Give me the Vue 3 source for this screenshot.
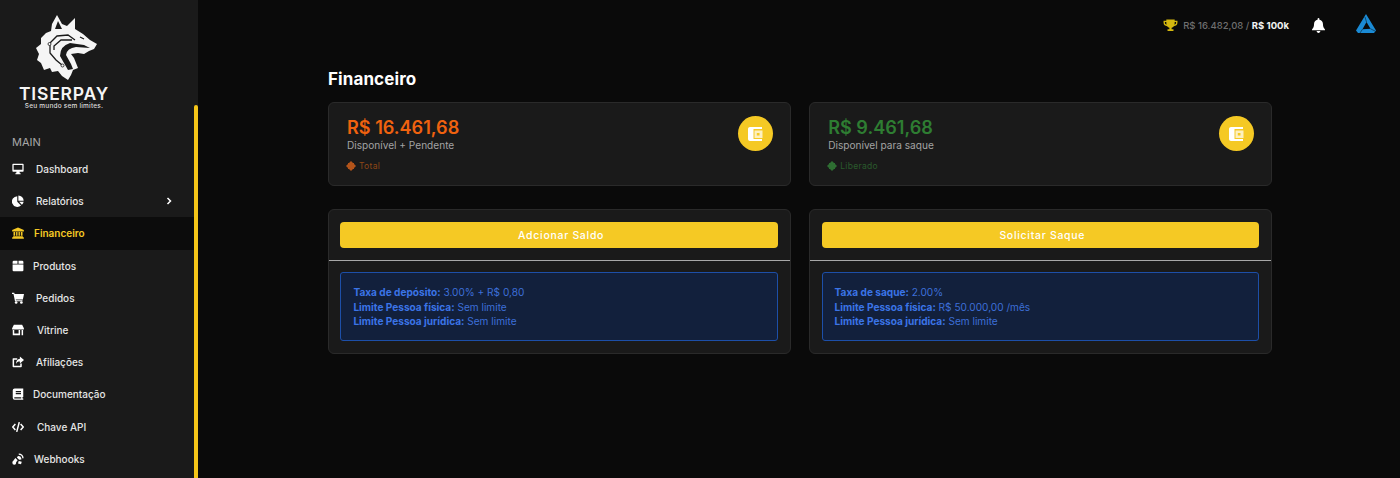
<template>
  <div class="layout">
    <aside class="sidebar">
      <div class="brand">
        <svg class="wolf" viewBox="35 14 64 68" width="64" height="68">
          <path class="wolf-body" d="M57 15 L62 24 L67 26 L75 18 L75 29 L83 34 L90 40 L97 44 L94 49 L89 51 L84 54 L78 53 L71 54 L74 58 L76 63 L78 68 L73 70 L71 75 L68 80 L62 76 L58 71 L52 72 L50 68 L44 70 L41 63 L37 60 L39 54 L36 48 L41 44 L41 38 L46 33 L51 31 L52 24 Z" />
          <path class="wolf-hole" d="M58 21 L62 29 L55 29 Z M60 56 Q60 46 70 43 L84 45 L90 48 L76 47 Q67 48 66 55 L71 64 L73 69 L68 70 Z" />
          <path class="wolf-cut" d="M50 43 L57 36 L68 35 L75 40 M50 45 L50 53 L56 60 L62 65 M54 50 L54 46 L61 40 L72 40 M80 37 L84 39" />
          <circle class="wolf-dot" cx="49.500" cy="44" r="1.500" />
          <circle class="wolf-dot" cx="62.500" cy="65.500" r="1.500" />
        </svg>
        <div class="brand-name">TISERPAY</div>
        <div class="brand-tag">Seu mundo sem limites.</div>
      </div>

      <div class="nav-label">MAIN</div>
      <nav class="nav">
        <a v-for="item in navItems" :key="item.label" class="nav-item" :class="{ active: item.active }">
          <svg class="nav-icon" viewBox="0 0 16 16" v-html="item.icon"></svg>
          <span class="nav-text" :style="{ marginLeft: item.gap + 'px' }">{{ item.label }}</span>
          <svg v-if="item.arrow" class="nav-arrow" viewBox="0 0 8 10" width="6" height="8">
            <path d="M2 1 L6 5 L2 9" />
          </svg>
        </a>
      </nav>
      <div class="scroll-thumb"></div>
    </aside>

    <div class="main">
      <header class="topbar">
        <svg class="trophy" viewBox="0 0 16 14" width="15" height="13">
          <path d="M3.500 0.500 H12.500 V1.800 H15.500 V4 C15.500 6.300 13.600 7.400 11.600 7.800 C11 8.600 10.200 9.100 9.200 9.300 V11 H11.200 V13 H4.800 V11 H6.800 V9.300 C5.800 9.100 5 8.600 4.400 7.800 C2.400 7.400 0.500 6.300 0.500 4 V1.800 H3.500 Z M2 3.200 V4 C2 5 2.800 5.700 3.800 6.100 C3.600 5.300 3.500 4.300 3.500 3.200 Z M14 3.200 H12.500 C12.500 4.300 12.400 5.300 12.200 6.100 C13.200 5.700 14 5 14 4 Z" />
        </svg>
        <span class="goal"><span class="goal-now">R$ 16.482,08 / </span><b>R$ 100k</b></span>
        <svg class="bell" viewBox="0 0 14 16" width="13" height="15">
          <path d="M7 0 C7.600 0 8 0.400 8 1 V1.700 C10.400 2.100 11.800 4.100 11.800 6.500 C11.800 9.500 12.600 10.800 14 12.300 V13 H0 V12.300 C1.400 10.800 2.200 9.500 2.200 6.500 C2.200 4.100 3.600 2.100 6 1.700 V1 C6 0.400 6.400 0 7 0 Z M5 14 H9 C9 15.100 8.100 16 7 16 C5.900 16 5 15.100 5 14 Z" />
        </svg>
        <svg class="logo-mark" viewBox="0 0 20 20" width="20" height="20">
          <path d="M10 0 L20 16.500 L18 19 L2 19 L0 16.500 Z M10.500 8 L6.500 15.200 L14.500 14.800 Z" fill-rule="evenodd" />
          <path class="logo-slit" d="M10.500 8 L9 3 M14.500 14.800 L19 17 M6.500 15.200 L4 19" />
        </svg>
      </header>

      <section class="content">
        <h1 class="page-title">Financeiro</h1>
        <div class="grid">
          <div v-for="card in balances" :key="card.note" class="card balance">
            <div>
              <div class="amount" :class="card.tone">{{ card.amount }}</div>
              <div class="caption">{{ card.caption }}</div>
              <div class="note" :class="card.tone">
                <svg viewBox="0 0 10 10" width="10" height="10"><path d="M5 0 L7 2 H8 V3 L10 5 L8 7 V8 H7 L5 10 L3 8 H2 V7 L0 5 L2 3 V2 H3 Z" /></svg>
                <span>{{ card.note }}</span>
              </div>
            </div>
            <div class="wallet">
              <svg viewBox="0 0 15 14" width="15" height="14">
                <path d="M2 0 H14 V2 H5.500 V12 H14 V14 H2 C0.900 14 0 13.100 0 12 V2 C0 0.900 0.900 0 2 0 Z" />
                <path class="wallet-pocket" d="M6.500 3.500 H14.500 V11 H6.500 Z M8.800 6 V8.500 H11.500 V6 Z" fill-rule="evenodd" />
              </svg>
            </div>
          </div>

          <div v-for="box in actions" :key="box.button" class="card action">
            <div class="action-top">
              <button class="action-btn">{{ box.button }}</button>
            </div>
            <div class="action-info">
              <div class="info">
                <div v-for="row in box.rows" :key="row[0]"><b>{{ row[0] }}</b> {{ row[1] }}</div>
              </div>
            </div>
          </div>
        </div>
      </section>
    </div>
  </div>
</template>

<script setup>
// ── Menu ──────────────────────────────────────────────────────────────────
const navItems = [
  { label: 'Dashboard', gap: 12, icon: '<path fill-rule="evenodd" d="M1.500 1 H14.500 A1 1 0 0 1 15.500 2 V10.500 A1 1 0 0 1 14.500 11.500 H10 L10.400 13.500 H11.500 V15 H4.500 V13.500 H5.600 L6 11.500 H1.500 A1 1 0 0 1 0.500 10.500 V2 A1 1 0 0 1 1.500 1 Z M2.200 2.700 V9 H13.800 V2.700 Z"/>' },
  { label: 'Relatórios', gap: 12, arrow: true, icon: '<path d="M7 1.500 V9 L12 14 A7.200 7.200 0 1 1 7 1.500 Z"/><path d="M8.500 0.500 A7 7 0 0 1 15.500 7.500 H8.500 Z"/><path d="M9.500 9 H15.500 A7.500 7.500 0 0 1 13.200 13 Z"/>' },
  { label: 'Financeiro', gap: 10, active: true, icon: '<path d="M8 0.500 L15.800 4 V6 H0.200 V4 Z"/><path d="M2 6.800 H4.200 V11.500 H2 Z M5.500 6.800 H7.300 V11.500 H5.500 Z M8.700 6.800 H10.500 V11.500 H8.700 Z M11.800 6.800 H14 V11.500 H11.800 Z"/><path d="M1.500 12.300 H14.500 V13.500 H15.800 V15.500 H0.200 V13.500 H1.500 Z"/>' },
  { label: 'Produtos', gap: 9, icon: '<path d="M2.500 1 H7.300 V5 H0.800 V2.800 A1.800 1.800 0 0 1 2.500 1 Z M8.700 1 H13.500 A1.800 1.800 0 0 1 15.200 2.800 V5 H8.700 Z M0.800 6 H15.200 V13.500 A1.500 1.500 0 0 1 13.700 15 H2.300 A1.500 1.500 0 0 1 0.800 13.500 Z"/>' },
  { label: 'Pedidos', gap: 12, icon: '<path d="M0 1 H3 L3.500 2.500 H16 L14.500 10 H5 L5.300 11 H14 V12.300 H4 L2 2.500 H0 Z"/><circle cx="5.500" cy="14" r="1.800"/><circle cx="12.500" cy="14" r="1.800"/>' },
  { label: 'Vitrine', gap: 13, icon: '<path d="M2.500 1 H13.500 L15.800 5.500 V7.300 H0.200 V5.500 Z"/><path fill-rule="evenodd" d="M1 8 H3 V12.500 H8.800 V8 H10.800 V15 H1 Z M12.800 8 H14.800 V15 H12.800 Z"/>' },
  { label: 'Afiliações', gap: 12, icon: '<path d="M1.500 3 H7 V5 H2.800 V13 H11 V10 H13 V14 A1 1 0 0 1 12 15 H1.800 A1 1 0 0 1 0.800 14 V4 A1 1 0 0 1 1.500 3 Z"/><path d="M10.500 0.500 L16 5.300 L10.500 10 V7.200 C8 7.200 6.500 8 5.300 10.500 C5.300 6.500 7.300 3.800 10.500 3.500 Z"/>' },
  { label: 'Documentação', gap: 9, icon: '<path fill-rule="evenodd" d="M3.500 0.500 H15 V12 H14 V14 H15 V15.500 H3.500 A2.500 2.500 0 0 1 1 13 V3 A2.500 2.500 0 0 1 3.500 0.500 Z M5 4 V5.500 H12 V4 Z M5 6.800 V8.300 H12 V6.800 Z M3.500 12.300 A0.900 0.900 0 0 0 3.500 14 H12.300 V12.300 Z"/>' },
  { label: 'Chave API', gap: 13, icon: '<path class="stroke" d="M4.500 4 L1 8 L4.500 12 M11.500 4 L15 8 L11.500 12 M9.700 1.500 L6.300 14.500"/>' },
  { label: 'Webhooks', gap: 10, icon: '<path d="M9 0.500 A6.500 6.500 0 0 1 15.500 7 L13.700 7 A4.700 4.700 0 0 0 9 2.300 Z"/><path d="M8 4 A4.500 4.500 0 0 1 12.500 8.500 L9.500 9 L6.500 6 Z"/><path d="M4.500 6.500 L7.500 9.500 L3.500 15 L0.500 12 Z"/><circle cx="3" cy="13" r="2.500"/><path d="M9 10.500 L13 11.500 L12 15 L8 14 Z"/>' },
]

// ── Cards ─────────────────────────────────────────────────────────────────
const balances = [
  { amount: 'R$ 16.461,68', caption: 'Disponível + Pendente', note: 'Total', tone: 'orange' },
  { amount: 'R$ 9.461,68', caption: 'Disponível para saque', note: 'Liberado', tone: 'green' },
]

const actions = [
  {
    button: 'Adcionar Saldo',
    rows: [
      ['Taxa de depósito:', '3.00% + R$ 0,80'],
      ['Limite Pessoa física:', 'Sem limite'],
      ['Limite Pessoa jurídica:', 'Sem limite'],
    ],
  },
  {
    button: 'Solicitar Saque',
    rows: [
      ['Taxa de saque:', '2.00%'],
      ['Limite Pessoa física:', 'R$ 50.000,00 /mês'],
      ['Limite Pessoa jurídica:', 'Sem limite'],
    ],
  },
]
</script>

<style>
html, body {
  margin: 0;
  height: 100%;
  overflow: hidden;
  background: #0a0a0a;
}
.nav-icon .stroke {
  fill: none;
  stroke: currentColor;
  stroke-width: 2;
}
</style>

<style scoped>
.layout {
  display: flex;
  height: 478px;
  overflow: hidden;
  background: #0a0a0a;
  font-family: Inter, "Liberation Sans", sans-serif;
  color: #fff;
}

/* ── Sidebar ── */
.sidebar {
  position: relative;
  flex: 0 0 198px;
  height: 478px;
  overflow: hidden;
  background: #1a1a1a;
}
.brand {
  display: flex;
  flex-direction: column;
  align-items: center;
  width: 128px;
  padding: 14px 0 0;
}
.wolf { margin-left: 6px; }
.wolf-body { fill: #f5f5f5; }
.wolf-hole { fill: #1a1a1a; }
.wolf-cut {
  fill: none;
  stroke: #1a1a1a;
  stroke-width: 1.300;
}
.wolf-dot { fill: #f5f5f5; stroke: #1a1a1a; stroke-width: 0.800; }
.brand-name {
  margin-top: 1px;
  font-size: 17.500px;
  font-weight: 600;
  line-height: 21px;
  letter-spacing: 0.800px;
  color: #f5f5f5;
}
.brand-tag {
  margin-top: -2px;
  font-size: 6.500px;
  font-weight: 500;
  line-height: 8px;
  letter-spacing: 0.200px;
  color: #ddd;
}
.nav-label {
  margin: 24px 0 0 12px;
  font-size: 11px;
  line-height: 16px;
  color: #a8a8a8;
}
.nav {
  display: flex;
  flex-direction: column;
  margin-top: 3px;
}
.nav-item {
  display: flex;
  align-items: center;
  height: 32.200px;
  padding-left: 12px;
  width: 194px;
  box-sizing: border-box;
  font-size: 10px;
  font-weight: 500;
  color: #e6e6e6;
}
.nav-item.active {
  background: #0c0c0c;
  color: #f5c924;
  font-weight: 600;
}
.nav-icon {
  flex: none;
  width: 12px;
  height: 12px;
  fill: currentColor;
}
.nav-item:not(.active) .nav-icon { color: #fff; }
.nav-arrow {
  margin-left: auto;
  margin-right: 22px;
  fill: none;
  stroke: #fff;
  stroke-width: 2;
}
.scroll-thumb {
  position: absolute;
  top: 105px;
  right: 0;
  bottom: 0;
  width: 4px;
  border-radius: 2px 2px 0 0;
  background: #f5c518;
}

/* ── Main ── */
.main {
  flex: 1;
  min-width: 0;
}
.topbar {
  display: flex;
  align-items: center;
  justify-content: flex-end;
  height: 50px;
  padding-right: 24px;
}
.trophy { fill: #d4b80f; margin-right: 5px; }
.goal {
  font-size: 9.500px;
  font-weight: 500;
  margin-right: 23px;
}
.goal-now { color: #6f6f6f; }
.goal b { color: #f2f2f2; font-weight: 700; }
.bell { fill: #fff; margin-right: 31px; }
.logo-mark { fill: #1a8ad4; margin-bottom: 2px; }
.logo-slit { stroke: #0a0a0a; stroke-width: 0.500; fill: none; }

.content {
  padding: 0 128px 0 130px;
}
.page-title {
  margin: 18px 0 12px;
  font-size: 17px;
  font-weight: 700;
  line-height: 22px;
  letter-spacing: 0.100px;
  color: #fff;
}
.grid {
  display: grid;
  grid-template-columns: 1fr 1fr;
  gap: 23px 18.400px;
}
.card {
  box-sizing: border-box;
  background: #1a1a1a;
  border: 1px solid #2a2a2a;
  border-radius: 6px;
}
.balance {
  display: flex;
  justify-content: space-between;
  height: 84px;
  padding: 14px 17px 0 18px;
}
.amount {
  font-size: 18.100px;
  font-weight: 600;
  line-height: 21px;
}
.amount.orange { color: #f0620f; }
.amount.green { color: #2e7d32; }
.caption {
  font-size: 10.100px;
  line-height: 15px;
  color: #a3a3a3;
}
.note {
  display: flex;
  align-items: center;
  gap: 3px;
  margin-top: 7px;
  font-size: 8.500px;
  line-height: 12px;
  letter-spacing: 0.300px;
}
.note svg { margin-left: -1px; }
.note.orange { color: #8f4716; fill: #b3541a; }
.note.green { color: #2a5a2d; fill: #2e6e32; }
.wallet {
  display: flex;
  align-items: center;
  justify-content: center;
  width: 35px;
  height: 35px;
  margin-top: -1px;
  border-radius: 50%;
  background: #f5c924;
  fill: #fff;
}
.wallet-pocket { fill: #fdf0bf; }
.action {
  height: 145px;
}
.action-top {
  padding: 12px 12px 12px 11.400px;
  border-bottom: 1px solid #a8a8a8;
}
.action-btn {
  display: block;
  width: 100%;
  height: 26px;
  padding: 0 0 0 4px;
  border: none;
  border-radius: 4px;
  background: #f5c924;
  color: #fff;
  font-family: inherit;
  font-size: 10.500px;
  font-weight: 500;
  letter-spacing: 0.700px;
}
.action-info {
  padding: 11px 12px 0 11.400px;
}
.info {
  box-sizing: border-box;
  height: 69px;
  padding: 12px 12px 0;
  background: #12203c;
  border: 1px solid #1d4fa8;
  border-radius: 3px;
  font-size: 10.100px;
  line-height: 14.700px;
  color: #3d6fd8;
}
.info b {
  font-weight: 700;
  color: #3b74e6;
}
</style>
